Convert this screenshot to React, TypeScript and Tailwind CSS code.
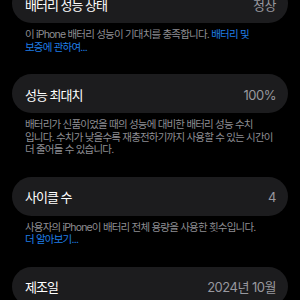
import React from "react";

const font = { fontFamily: '"Inter", "Noto Sans CJK KR", sans-serif' };

function Card({ label, value }: { label: string; value: string }) {
  return (
    <div className="mx-[12px] h-[39px] rounded-[20px] bg-[#1c1c1e] flex items-center justify-between pl-[13px] pr-[12px] pt-[3px]">
      <span className="text-[13px] text-white tracking-[-1px] leading-none">{label}</span>
      <span className="text-[13px] text-[#98989f] tracking-[-0.5px] leading-none">{value}</span>
    </div>
  );
}

function Note({ children }: { children: React.ReactNode }) {
  return (
    <div className="mx-[12px] pl-[13px] pt-[6px] pb-[20px] text-[10.5px] leading-[12.5px] text-[#8e8e93] tracking-[-0.8px] whitespace-nowrap">
      {children}
    </div>
  );
}

export default function App() {
  return (
    <div className="w-[300px] h-[300px] bg-black overflow-hidden" style={font}>
      <div className="mt-[-16px]">
        <Card label="배터리 성능 상태" value="정상" />
        <Note>
          이 iPhone 배터리 성능이 기대치를 충족합니다. <span className="text-[#1f7ee6]">배터리 및</span>
          <br />
          <span className="text-[#1f7ee6]">보증에 관하여...</span>
        </Note>
        <Card label="성능 최대치" value="100%" />
        <Note>
          배터리가 신품이었을 때의 성능에 대비한 배터리 성능 수치
          <br />
          입니다. 수치가 낮을수록 재충전하기까지 사용할 수 있는 시간이
          <br />
          더 줄어들 수 있습니다.
        </Note>
        <Card label="사이클 수" value="4" />
        <Note>
          사용자의 iPhone이 배터리 전체 용량을 사용한 횟수입니다.
          <br />
          <span className="text-[#1f7ee6]">더 알아보기...</span>
        </Note>
        <Card label="제조일" value="2024년 10월" />
      </div>
    </div>
  );
}
